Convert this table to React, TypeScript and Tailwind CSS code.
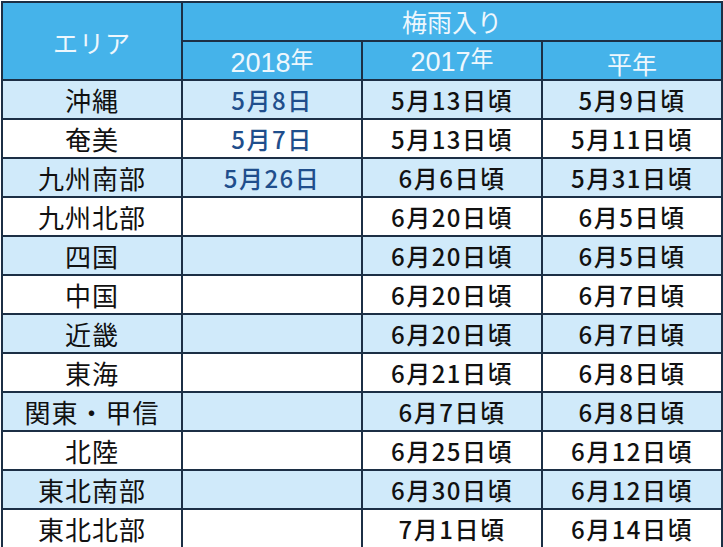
const rows: [string, string, string, string][] = [
  ['沖縄', '5月8日', '5月13日頃', '5月9日頃'],
  ['奄美', '5月7日', '5月13日頃', '5月11日頃'],
  ['九州南部', '5月26日', '6月6日頃', '5月31日頃'],
  ['九州北部', '', '6月20日頃', '6月5日頃'],
  ['四国', '', '6月20日頃', '6月5日頃'],
  ['中国', '', '6月20日頃', '6月7日頃'],
  ['近畿', '', '6月20日頃', '6月7日頃'],
  ['東海', '', '6月21日頃', '6月8日頃'],
  ['関東・甲信', '', '6月7日頃', '6月8日頃'],
  ['北陸', '', '6月25日頃', '6月12日頃'],
  ['東北南部', '', '6月30日頃', '6月12日頃'],
  ['東北北部', '', '7月1日頃', '6月14日頃'],
];

const cell = 'border-2 border-[#1c2f45] text-center leading-none';

export default function App() {
  return (
    <div className="w-[723px] h-[547px] overflow-hidden bg-white pt-[1px] pl-[1px] font-['Noto_Sans_CJK_JP',sans-serif]">
      <table className="border-collapse table-fixed w-[720px] border-2 border-[#1c2f45]">
        <colgroup>
          <col className="w-[180px]" />
          <col className="w-[180px]" />
          <col className="w-[180px]" />
          <col className="w-[180px]" />
        </colgroup>
        <thead>
          <tr className="h-[39px] bg-[#45b3ea] text-[#eef7fd]">
            <th rowSpan={2} className={`${cell} font-normal text-[25px] tracking-[1px] pt-[2px]`}>
              エリア
            </th>
            <th colSpan={3} className={`${cell} font-normal text-[25px]`}>
              梅雨入り
            </th>
          </tr>
          <tr className="h-[39px] bg-[#45b3ea] text-[#eef7fd]">
            <th className={`${cell} font-normal text-[27px] font-['Liberation_Sans',sans-serif] pt-[2px]`}>
              2018<span className="text-[23px] align-[4px] font-['Noto_Sans_CJK_JP',sans-serif]">年</span>
            </th>
            <th className={`${cell} font-normal text-[27px] font-['Liberation_Sans',sans-serif]`}>
              2017<span className="text-[23px] align-[4px] font-['Noto_Sans_CJK_JP',sans-serif]">年</span>
            </th>
            <th className={`${cell} font-normal text-[25px] pt-[6px]`}>平年</th>
          </tr>
        </thead>
        <tbody>
          {rows.map(([area, y18, y17, avg], i) => (
            <tr key={area} className={`h-[39px] ${i % 2 === 0 ? 'bg-[#d0eafa]' : 'bg-white'}`}>
              <td className={`${cell} text-[26px] tracking-[1px] text-[#111]`}>{area}</td>
              <td className={`${cell} text-[24px] tracking-[1.5px] font-medium text-[#1f4e8c]`}>{y18}</td>
              <td className={`${cell} text-[24px] tracking-[1.5px] font-medium text-[#111]`}>{y17}</td>
              <td className={`${cell} text-[24px] tracking-[1.5px] font-medium text-[#111]`}>{avg}</td>
            </tr>
          ))}
        </tbody>
      </table>
    </div>
  );
}
